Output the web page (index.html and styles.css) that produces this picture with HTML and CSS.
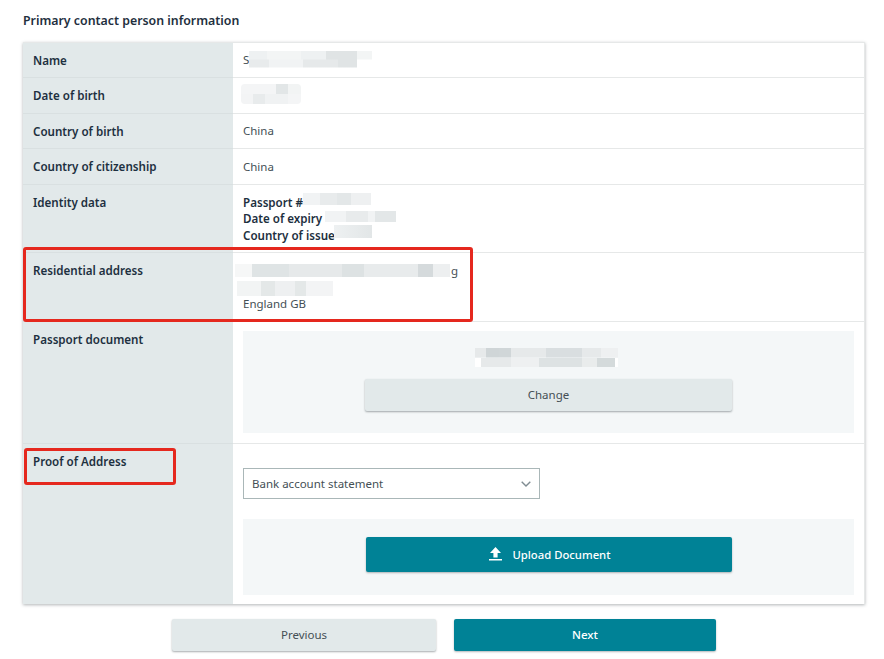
FILE: index.html
```html
<!DOCTYPE html>
<html lang="en">
<head>
<meta charset="utf-8">
<title>Primary contact person information</title>
<link rel="stylesheet" href="styles.css">
</head>
<body>
<main class="page">
  <h2 class="title">Primary contact person information</h2>
  <section class="table">
    <div class="row">
      <div class="label">Name</div>
      <div class="value">S<span class="mosaic m-name"></span></div>
    </div>
    <div class="row">
      <div class="label">Date of birth</div>
      <div class="value">&nbsp;<span class="mosaic m-dob"></span></div>
    </div>
    <div class="row">
      <div class="label">Country of birth</div>
      <div class="value">China</div>
    </div>
    <div class="row">
      <div class="label">Country of citizenship</div>
      <div class="value">China</div>
    </div>
    <div class="row">
      <div class="label">Identity data</div>
      <div class="value value-id">
        <div class="strong">Passport #</div>
        <div class="strong">Date of expiry</div>
        <div class="strong">Country of issue</div>
        <span class="mosaic m-pass"></span>
        <span class="mosaic m-exp"></span>
        <span class="mosaic m-issue"></span>
      </div>
    </div>
    <div class="row">
      <div class="label">Residential address</div>
      <div class="value">
        <div class="addr-line">g</div>
        <div>&nbsp;</div>
        <div>England GB</div>
        <span class="mosaic m-addr1"></span>
        <span class="mosaic m-addr2"></span>
      </div>
    </div>
    <div class="row">
      <div class="label">Passport document</div>
      <div class="value value-doc">
        <div class="panel panel-doc">
          <div class="filename"><span class="mosaic m-file"></span></div>
          <button class="btn btn-light btn-change" type="button">Change</button>
        </div>
      </div>
    </div>
    <div class="row row-last">
      <div class="label">Proof of Address</div>
      <div class="value value-proof">
        <div class="select">
          <span>Bank account statement</span>
          <svg class="chev" width="10" height="6" viewBox="0 0 10 6" aria-hidden="true"><path d="M.7.7 5 5 9.3.7" fill="none" stroke="#7f8c92" stroke-width="1.4"/></svg>
        </div>
        <div class="panel panel-upload">
          <button class="btn btn-primary btn-upload" type="button">
            <svg width="13" height="14" viewBox="0 0 13 14" aria-hidden="true"><path d="M6.5 0 12 6H8.6v4.6H4.4V6H1z M0 12h13v1.6H0z" fill="#fff"/></svg>
            <span>Upload Document</span>
          </button>
        </div>
      </div>
    </div>
  </section>
  <nav class="actions">
    <button class="btn btn-light btn-prev" type="button">Previous</button>
    <button class="btn btn-primary btn-next" type="button">Next</button>
  </nav>
  <div class="mark mark-address"></div>
  <div class="mark mark-proof"></div>
</main>
</body>
</html>
```
FILE: styles.css
```css
* { box-sizing: border-box; }
html, body { margin: 0; background: #fff; }
body {
  font-family: "Noto Sans", "Open Sans", sans-serif;
  font-size: 11.5px;
  line-height: 16.5px;
  color: #444f55;
}
.page { position: relative; width: 884px; height: 659px; padding: 12px 19px 0 23px; overflow: hidden; }
.title { margin: 0 0 12.5px; font-size: 12.35px; line-height: 17px; font-weight: 600; color: #232f3e; }
.table { border-top: 1px solid #e6e8e8; border-right: 1px solid #e6e8e8; box-shadow: 0 1px 3px rgba(60,70,75,.4); }
.row { display: flex; }
.label {
  flex: 0 0 210px;
  padding: 10px 10px 8px;
  background: #e2e9ea;
  border-bottom: 1px solid #d9e0e1;
  font-size: 11.6px;
  font-weight: 600;
  color: #1d3040;
}
.value { position: relative; flex: 1; padding: 9.5px 10px 8.5px; border-bottom: 1px solid #e6e8e8; background: #fff; }
.value-id { padding: 10px 10px 8px; }
.row-last .label, .row-last .value { border-bottom: 0; }
.strong { font-size: 11.6px; font-weight: 600; color: #1d3040; }
.addr-line { text-indent: 208px; }
.panel { background: #f4f7f8; text-align: center; }
.value-doc { padding: 9.5px 10px; }
.panel-doc { height: 102px; padding-top: 17px; }
.filename { position: relative; height: 31px; }
.btn {
  display: inline-flex; align-items: center; justify-content: center; gap: 10px;
  border: 0; border-radius: 2px; padding: 0; margin: 0;
  font: inherit; cursor: pointer;
}
.btn-light { background: #e2e9ea; color: #444f55; box-shadow: 0 1px 2px rgba(40,50,55,.4); }
.btn-primary { background: #008296; color: #fff; font-weight: 500; box-shadow: 0 1px 2px rgba(40,50,55,.35); }
.btn-change { width: 367px; height: 32px; padding-top: 1px; }
.value-proof { padding-top: 24.5px; height: 160.5px; }
.select {
  display: flex; align-items: center; justify-content: space-between;
  width: 297px; height: 31px; padding: 1px 8px 0;
  border: 1px solid #aab7b8; background: #fff; color: #444f55;
}
.panel-upload { height: 76px; margin-top: 20px; padding-top: 18px; }
.btn-upload { width: 366px; height: 35px; padding: 1px 0 0 3px; font-size: 11.3px; }
.btn-upload svg { margin-top: -2px; }
.actions { display: flex; gap: 18px; margin: 15px 0 0 149px; }
.btn-prev { width: 264px; height: 32px; }
.btn-next { width: 262px; height: 32px; }
.mosaic { position: absolute; display: block; }
.m-name { left: 16px; top: 8px; width: 123px; height: 17px; background-repeat: no-repeat;
  background-image:
    linear-gradient(90deg,#eef1f2 0 15%,#f3f5f5 15% 42%,#eef1f2 42% 63%,#e0e4e5 63% 88%,#f3f5f5 88%),
    linear-gradient(90deg,#e8ebec 0 16%,#f1f3f4 16% 44%,#e6e9ea 44% 72%,#e0e4e5 72% 88%,#fff 88%);
  background-size: 100% 50%;
  background-position: top, bottom; }
.m-dob { left: 8px; top: 6px; width: 60px; height: 20px; border-radius: 4px; background-repeat: no-repeat;
  background-image:
    linear-gradient(90deg,#f4f5f6 0 58%,#e2e6e7 58% 78%,#f2f4f4 78%),
    linear-gradient(90deg,#f3f4f5 0 20%,#e8ebec 20% 40%,#f0f2f3 40% 78%,#f4f5f6 78%);
  background-size: 100% 50%;
  background-position: top, bottom; }
.m-pass { left: 70px; top: 8px; width: 68px; height: 12px;
  background: linear-gradient(90deg,#f1f3f4 0 25%,#e8ebec 25% 50%,#e3e7e8 50% 70%,#eef0f1 70%); }
.m-exp { left: 92px; top: 26px; width: 71px; height: 11px;
  background: linear-gradient(90deg,#f1f3f4 0 30%,#e8ebec 30% 60%,#f1f3f4 60% 70%,#e3e7e8 70%); }
.m-issue { left: 101px; top: 40px; width: 38px; height: 13px;
  background: linear-gradient(90deg,#eef1f2,#e2e6e7); }
.m-addr1 { left: 2px; top: 11px; width: 215px; height: 13px;
  background: linear-gradient(90deg,#f6f7f7 0 8%,#dfe4e5 8% 25%,#e6e9ea 25% 50%,#dde2e3 50% 60%,#e8ebec 60% 85%,#d5dadc 85% 92%,#edeff0 92%); }
.m-addr2 { left: 4px; top: 28px; width: 96px; height: 15px;
  background: linear-gradient(90deg,#f2f4f4 0 25%,#e4e8e8 25% 40%,#eef0f1 40% 60%,#e4e8e8 60% 72%,#f3f4f5 72%); }
.m-file { left: 232px; top: 0; width: 143px; height: 19px; background-repeat: no-repeat;
  background-image:
    linear-gradient(90deg,#e6e9ea 0 8%,#cfd5d7 8% 17%,#d0d6d8 17% 25%,#e6e9ea 25% 50%,#d9dee0 50% 75%,#e6e9ea 75% 88%,#eef0f1 88%),
    linear-gradient(90deg,#fff 0 4%,#e6e9ea 4% 25%,#eef0f1 25% 45%,#dde2e3 45% 75%,#e9ecec 75% 85%,#d4dadb 85% 98%,#fff 98%);
  background-size: 100% 50%;
  background-position: top, bottom; }
.mark { position: absolute; border: 3px solid #e5281e; border-radius: 3px; }
.mark-address { left: 23px; top: 247px; width: 450px; height: 75px; }
.mark-proof { left: 24px; top: 448px; width: 152px; height: 37px; }
```
